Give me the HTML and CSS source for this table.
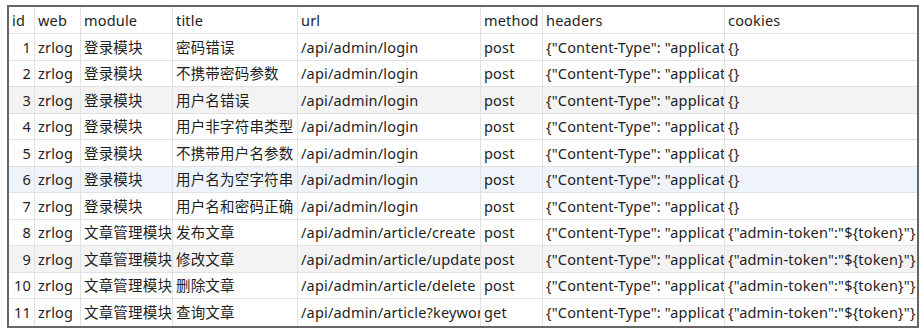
FILE: index.html
```html
<!DOCTYPE html>
<html lang="zh-CN">
<head>
<meta charset="utf-8">
<title>cases</title>
<link rel="stylesheet" href="styles.css">
</head>
<body>
<div class="grid">
  <div class="c hd">id</div><div class="c hd">web</div><div class="c hd">module</div><div class="c hd">title</div><div class="c hd">url</div><div class="c hd">method</div><div class="c hd">headers</div><div class="c hd last">cookies</div>

  <div class="c num">1</div><div class="c">zrlog</div><div class="c">登录模块</div><div class="c">密码错误</div><div class="c">/api/admin/login</div><div class="c">post</div><div class="c">{"Content-Type": "application/json"}</div><div class="c last">{}</div>

  <div class="c num">2</div><div class="c">zrlog</div><div class="c">登录模块</div><div class="c">不携带密码参数</div><div class="c">/api/admin/login</div><div class="c">post</div><div class="c">{"Content-Type": "application/json"}</div><div class="c last">{}</div>

  <div class="c num gray">3</div><div class="c gray">zrlog</div><div class="c gray">登录模块</div><div class="c gray">用户名错误</div><div class="c gray">/api/admin/login</div><div class="c gray">post</div><div class="c gray">{"Content-Type": "application/json"}</div><div class="c last gray">{}</div>

  <div class="c num">4</div><div class="c">zrlog</div><div class="c">登录模块</div><div class="c">用户非字符串类型</div><div class="c">/api/admin/login</div><div class="c">post</div><div class="c">{"Content-Type": "application/json"}</div><div class="c last">{}</div>

  <div class="c num">5</div><div class="c">zrlog</div><div class="c">登录模块</div><div class="c">不携带用户名参数</div><div class="c">/api/admin/login</div><div class="c">post</div><div class="c">{"Content-Type": "application/json"}</div><div class="c last">{}</div>

  <div class="c num blue">6</div><div class="c blue">zrlog</div><div class="c blue">登录模块</div><div class="c blue">用户名为空字符串</div><div class="c blue">/api/admin/login</div><div class="c blue">post</div><div class="c blue">{"Content-Type": "application/json"}</div><div class="c last blue">{}</div>

  <div class="c num">7</div><div class="c">zrlog</div><div class="c">登录模块</div><div class="c">用户名和密码正确</div><div class="c">/api/admin/login</div><div class="c">post</div><div class="c">{"Content-Type": "application/json"}</div><div class="c last">{}</div>

  <div class="c num">8</div><div class="c">zrlog</div><div class="c">文章管理模块</div><div class="c">发布文章</div><div class="c">/api/admin/article/create</div><div class="c">post</div><div class="c">{"Content-Type": "application/json"}</div><div class="c last">{"admin-token":"${token}"}</div>

  <div class="c num gray">9</div><div class="c gray">zrlog</div><div class="c gray">文章管理模块</div><div class="c gray">修改文章</div><div class="c gray">/api/admin/article/update</div><div class="c gray">post</div><div class="c gray">{"Content-Type": "application/json"}</div><div class="c last gray">{"admin-token":"${token}"}</div>

  <div class="c num">10</div><div class="c">zrlog</div><div class="c">文章管理模块</div><div class="c">删除文章</div><div class="c">/api/admin/article/delete</div><div class="c">post</div><div class="c">{"Content-Type": "application/json"}</div><div class="c last">{"admin-token":"${token}"}</div>

  <div class="c num end">11</div><div class="c end">zrlog</div><div class="c end">文章管理模块</div><div class="c end">查询文章</div><div class="c end">/api/admin/article?keyword=zrlog</div><div class="c end">get</div><div class="c end">{"Content-Type": "application/json"}</div><div class="c last end">{"admin-token":"${token}"}</div>
</div>
</body>
</html>
```

FILE: styles.css
```css
html, body {
  margin: 0;
  padding: 0;
  background: #ffffff;
}

body {
  padding: 5px 0 0 7px;
  font-family: "Noto Sans", "Noto Sans CJK SC", sans-serif;
  font-size: 14.5px;
  letter-spacing: 0.18px;
  color: #1e1e1e;
}

.grid {
  display: grid;
  width: 908px;
  grid-template-columns: 26px 46px 92px 125px 183px 62px 182px 192px;
  grid-template-rows: 27px;
  grid-auto-rows: 26.5px;
  border: 2px solid #666666;
}

.c {
  box-sizing: border-box;
  border-right: 1px solid #e2e2e2;
  border-bottom: 1px solid #e2e2e2;
  padding: 0 3px;
  white-space: nowrap;
  overflow: hidden;
  display: flex;
  align-items: center;
  line-height: 1;
}

.c.last {
  border-right: none;
}

.c.end {
  border-bottom: none;
}

.c.num {
  justify-content: flex-end;
  padding-right: 3px;
}

.c.hd {
  padding-top: 1px;
}

.gray {
  background: #f3f3f3;
}

.blue {
  background: #eef4fa;
}
```
